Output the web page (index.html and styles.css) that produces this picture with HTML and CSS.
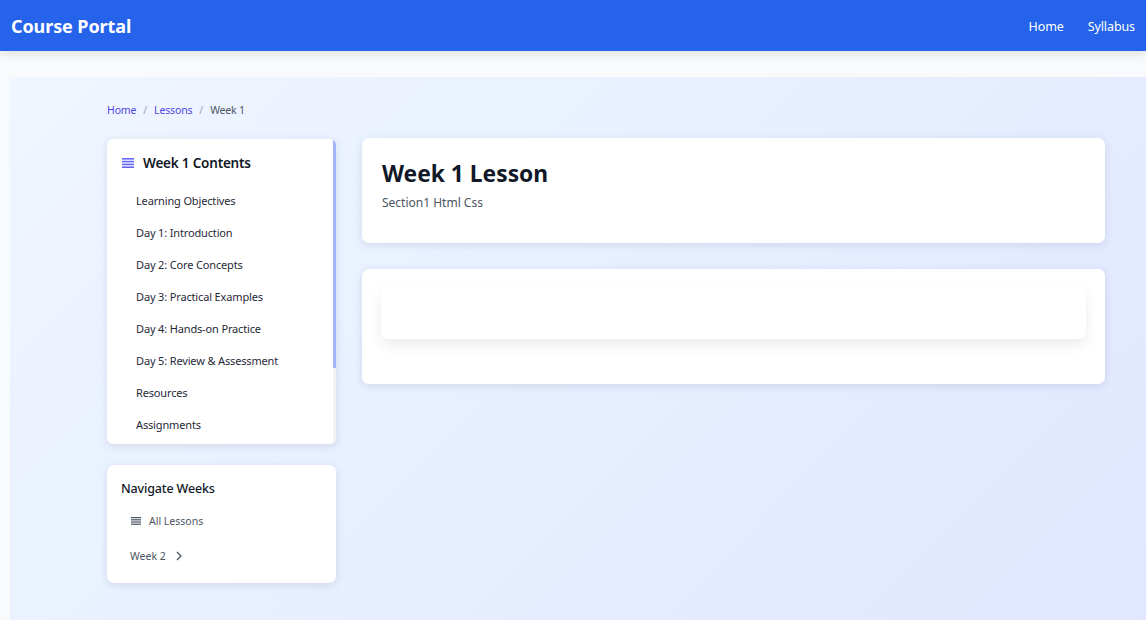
FILE: index.html
```html
<!DOCTYPE html>
<html lang="en">
<head>
<meta charset="utf-8">
<title>Week 1 Lesson</title>
<link rel="stylesheet" href="styles.css">
</head>
<body>
<header class="topbar">
  <a class="brand" href="#">Course Portal</a>
  <nav class="topnav">
    <a href="#">Home</a>
    <a href="#">Syllabus</a>
  </nav>
</header>
<main class="page">
  <div class="wrap">
    <nav class="crumbs">
      <a href="#">Home</a><span class="sep">/</span><a href="#">Lessons</a><span class="sep">/</span><span class="current">Week 1</span>
    </nav>
    <div class="layout">
      <aside class="side">
        <div class="card toc">
          <div class="toc-head">
            <svg class="menu-ico" width="12" height="10" viewBox="0 0 12 10"><rect x="0" y="0" width="12" height="1.6" fill="#6366f1"/><rect x="0" y="2.8" width="12" height="1.6" fill="#6366f1"/><rect x="0" y="5.6" width="12" height="1.6" fill="#6366f1"/><rect x="0" y="8.4" width="12" height="1.6" fill="#6366f1"/></svg>
            <span>Week 1 Contents</span>
          </div>
          <ul class="toc-list">
            <li><a href="#">Learning Objectives</a></li>
            <li><a href="#">Day 1: Introduction</a></li>
            <li><a href="#">Day 2: Core Concepts</a></li>
            <li><a href="#">Day 3: Practical Examples</a></li>
            <li><a href="#">Day 4: Hands-on Practice</a></li>
            <li><a href="#">Day 5: Review &amp; Assessment</a></li>
            <li><a href="#">Resources</a></li>
            <li><a href="#">Assignments</a></li>
          </ul>
          <span class="scroll-bar"></span>
        </div>
        <div class="card weeks">
          <div class="weeks-title">Navigate Weeks</div>
          <a class="weeks-all" href="#">
            <svg width="10" height="8" viewBox="0 0 10 8"><rect x="0" y="0" width="10" height="1.2" fill="#4b5563"/><rect x="0" y="2.2" width="10" height="1.2" fill="#4b5563"/><rect x="0" y="4.4" width="10" height="1.2" fill="#4b5563"/><rect x="0" y="6.6" width="10" height="1.2" fill="#4b5563"/></svg>
            <span>All Lessons</span>
          </a>
          <a class="weeks-next" href="#">
            <span>Week 2</span>
            <svg width="6" height="10" viewBox="0 0 6 10"><path d="M1 1 L5 5 L1 9" fill="none" stroke="#4b5563" stroke-width="1.3"/></svg>
          </a>
        </div>
      </aside>
      <section class="content">
        <div class="card intro">
          <h1>Week 1 Lesson</h1>
          <p>Section1 Html Css</p>
        </div>
        <div class="card body-card">
          <div class="inner"></div>
        </div>
      </section>
    </div>
  </div>
</main>
</body>
</html>
```
FILE: styles.css
```css
* { box-sizing: border-box; }
html, body { margin: 0; padding: 0; }
body {
  font-family: "Noto Sans", "Open Sans", sans-serif;
  background: #f9fafb;
  color: #1f2937;
  overflow: hidden;
  height: 620px;
}
a { text-decoration: none; color: inherit; }

.topbar {
  height: 51px;
  background: #2563eb;
  display: flex;
  align-items: center;
  justify-content: space-between;
  padding: 0 11px;
  box-shadow: 0 2px 10px rgba(0, 0, 0, 0.12);
  position: relative;
  z-index: 2;
}
.brand { color: #fff; font-weight: 700; font-size: 18px; letter-spacing: -0.1px; padding-top: 1px; }
.topnav { display: flex; gap: 24px; }
.topnav a { color: #fff; font-size: 12.5px; letter-spacing: -0.1px; padding-top: 1px; }

.page {
  margin: 26px 0 0 10px;
  background: linear-gradient(135deg, #eff6ff 0%, #e0e7ff 100%);
  height: 560px;
}
.wrap { padding: 25px 0 0 97px; width: 1095px; }

.crumbs { font-size: 10.5px; height: 16px; line-height: 16px; display: flex; align-items: center; letter-spacing: -0.15px; }
.crumbs a { color: #4f46e5; }
.crumbs .sep { color: #9ca3af; margin: 0 7px; }
.crumbs .current { color: #4b5563; }

.layout {
  margin-top: 20px;
  display: grid;
  grid-template-columns: 229px 743px;
  gap: 26px;
  align-items: start;
}
.card {
  background: #fff;
  border-radius: 7px;
  box-shadow: 0 2px 8px rgba(30, 41, 80, 0.12);
}
.side { display: flex; flex-direction: column; gap: 21px; margin-top: 1px; }

.toc {
  position: relative;
  height: 305px;
  overflow: hidden;
  padding: 14px 0 10px 15px;
  border-radius: 6px;
}
.scroll-bar {
  position: absolute;
  top: 0;
  right: 0;
  width: 3px;
  height: 100%;
  background: linear-gradient(#a5b4fc 0, #a5b4fc 229px, #f1f2f4 229px);
}
.toc-head {
  display: flex;
  align-items: center;
  gap: 9px;
  font-size: 13.5px;
  font-weight: 600;
  color: #111827;
  height: 20px;
  letter-spacing: -0.2px;
}
.toc-list { list-style: none; margin: 11px 0 0; padding: 0 0 0 14px; }
.toc-list li { height: 32px; display: flex; align-items: center; }
.toc-list a { font-size: 11px; color: #1f2937; letter-spacing: -0.15px; }

.weeks { padding: 14px 14px 12px 14px; height: 118px; }
.weeks-title { font-size: 12.5px; font-weight: 500; color: #111827; height: 20px; line-height: 20px; letter-spacing: -0.15px; }
.weeks-all { display: flex; align-items: center; gap: 8px; font-size: 10.5px; color: #4b5563; margin: 14px 0 0 10px; height: 16px; }
.weeks-next { display: flex; align-items: center; gap: 10px; font-size: 10.5px; color: #4b5563; margin: 19px 0 0 9px; height: 16px; }

.content { display: flex; flex-direction: column; gap: 26px; }
.intro { height: 105px; padding: 21px 20px 19px; }
.intro h1 { margin: 0; font-size: 22.8px; font-weight: 700; color: #111827; line-height: 30px; }
.intro p { margin: 5px 0 0; font-size: 12px; color: #4b5563; }
.body-card { height: 115px; padding: 18px 19px; }
.inner {
  height: 52px;
  border-radius: 7px;
  background: #fff;
  box-shadow: 0 6px 14px rgba(0, 0, 0, 0.08);
}
```
